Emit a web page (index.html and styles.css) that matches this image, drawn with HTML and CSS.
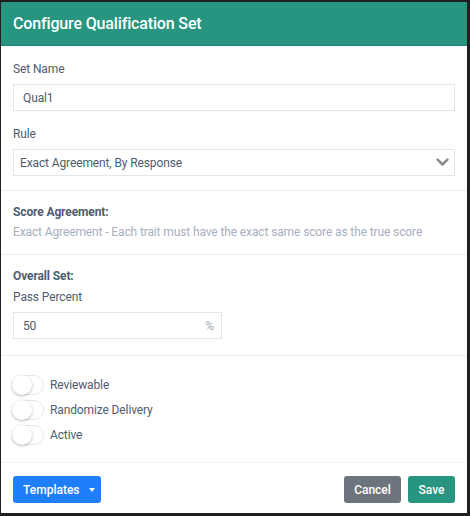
FILE: index.html
```html
<!DOCTYPE html>
<html>
<head>
<meta charset="utf-8">
<link rel="stylesheet" href="styles.css">
</head>
<body>
<div class="modal">
  <div class="modal-header">
    <h1 class="modal-title">Configure Qualification Set</h1>
  </div>
  <div class="section section-form">
    <label class="field-label">Set Name</label>
    <div class="input">Qual1</div>
    <label class="field-label spaced">Rule</label>
    <div class="input select">
      <span>Exact Agreement, By Response</span>
      <svg class="chevron" width="13" height="9" viewBox="0 0 13 9"><path d="M1.6 1.6 L6.5 6.5 L11.4 1.6" fill="none" stroke="#8c8c8c" stroke-width="2.6" stroke-linecap="round" stroke-linejoin="round"/></svg>
    </div>
  </div>
  <div class="section section-score">
    <div class="heading">Score Agreement:</div>
    <div class="desc">Exact Agreement - Each trait must have the exact same score as the true score</div>
  </div>
  <div class="section section-overall">
    <div class="heading">Overall Set:</div>
    <label class="field-label sub">Pass Percent</label>
    <div class="input percent">
      <span>50</span>
      <span class="unit">%</span>
    </div>
  </div>
  <div class="section section-toggles">
    <div class="toggle-row"><span class="toggle"><span class="knob"></span></span><span class="toggle-label">Reviewable</span></div>
    <div class="toggle-row"><span class="toggle"><span class="knob"></span></span><span class="toggle-label">Randomize Delivery</span></div>
    <div class="toggle-row"><span class="toggle"><span class="knob"></span></span><span class="toggle-label">Active</span></div>
  </div>
  <div class="modal-footer">
    <button class="btn btn-primary">Templates <span class="caret"></span></button>
    <div class="footer-right">
      <button class="btn btn-secondary">Cancel</button>
      <button class="btn btn-save">Save</button>
    </div>
  </div>
</div>
</body>
</html>
```

FILE: styles.css
```css
* { box-sizing: border-box; }
html, body { margin: 0; height: 516px; }
body {
  background: #1f1f1f;
  padding: 2px 3px 3px 1px;
  font-family: Roboto, "Liberation Sans", Arial, sans-serif;
  font-size: 12px;
  letter-spacing: -0.12px;
  color: #505c6e;
}
.modal {
  width: 466px;
  height: 511px;
  background: #fff;
  display: flex;
  flex-direction: column;
}
.modal-header {
  background: #27957f;
  height: 44px;
  padding: 0 12px;
  display: flex;
  align-items: center;
  border-bottom: 1px solid #1f8570;
}
.modal-title {
  margin: 0;
  font-size: 16px;
  font-weight: 500;
  color: #fff;
  line-height: 20px;
  letter-spacing: -0.15px;
}
.section {
  padding: 0 12px;
  border-bottom: 1px solid #eaecef;
}
.section-form { padding-top: 14px; padding-bottom: 14px; }
.section-score { padding-top: 12px; padding-bottom: 13px; }
.section-overall { padding-top: 12px; padding-bottom: 16px; }
.section-toggles { padding-top: 16px; padding-bottom: 15px; border-bottom-color: #f1f2f4; }
.field-label {
  display: block;
  line-height: 18px;
  margin-bottom: 6px;
}
.field-label.spaced { margin-top: 14px; }
.field-label.sub { margin-top: 3px; }
.input {
  height: 27px;
  border: 1px solid #e2e6ea;
  display: flex;
  align-items: center;
  padding: 0 9px;
  color: #505c6e;
}
.select {
  padding: 0 5px 0 6px;
  justify-content: space-between;
}
.chevron { display: block; }
.heading {
  font-weight: 700;
  line-height: 18px;
}
.desc {
  margin-top: 2px;
  line-height: 18px;
  color: #a7b0bd;
}
.percent {
  width: 209px;
  justify-content: space-between;
  padding-right: 7px;
}
.unit { color: #a0a8b4; }
.toggle-row {
  height: 25px;
  display: flex;
  align-items: center;
}
.toggle {
  position: relative;
  width: 32px;
  height: 20px;
  border: 1px solid #e3e7eb;
  border-radius: 10px;
  margin-left: -1px;
  margin-right: 6px;
  background: #fff;
}
.knob {
  position: absolute;
  left: -1px;
  top: -1px;
  width: 20px;
  height: 20px;
  border-radius: 50%;
  background: #fff;
  box-shadow: 0 1px 3px rgba(0,0,0,0.28);
}
.modal-footer {
  padding: 13px 12px 0;
  display: flex;
  justify-content: space-between;
  align-items: flex-start;
}
.footer-right { display: flex; gap: 7px; }
.btn {
  height: 27px;
  border: none;
  border-radius: 3px;
  font-family: Roboto, "Liberation Sans", Arial, sans-serif;
  font-size: 12px;
  font-weight: 500;
  letter-spacing: 0;
  color: #fff;
  padding: 0 10px;
  display: flex;
  align-items: center;
}
.btn-primary { background: #1f7ffb; width: 88px; padding-left: 10px; }
.caret {
  display: inline-block;
  margin-left: 9px;
  width: 0;
  height: 0;
  border-left: 3.5px solid transparent;
  border-right: 3.5px solid transparent;
  border-top: 4px solid #fff;
}
.btn-secondary { background: #6c757d; width: 57px; justify-content: center; }
.btn-save { background: #27957f; width: 47px; justify-content: center; }
```
